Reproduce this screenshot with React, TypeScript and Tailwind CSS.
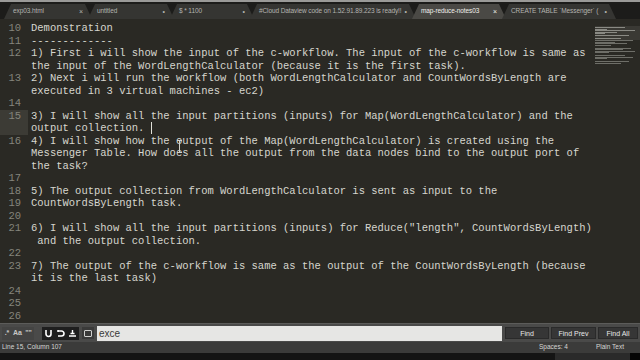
import React from 'react';

type Row = { n?: number; t: string; hl?: boolean; caret?: boolean };

const rows: Row[] = [
  { n: 10, t: 'Demonstration' },
  { n: 11, t: '-------------' },
  { n: 12, t: '1) First i will show the input of the c-workflow. The input of the c-workflow is same as' },
  { t: 'the input of the WordLengthCalculator (because it is the first task).' },
  { n: 13, t: '2) Next i will run the workflow (both WordLengthCalculator and CountWordsByLength are' },
  { t: 'executed in 3 virtual machines - ec2)' },
  { n: 14, t: '' },
  { n: 15, t: '3) I will show all the input partitions (inputs) for Map(WordLengthCalculator) and the', hl: true },
  { t: 'output collection. ', hl: true, caret: true },
  { n: 16, t: '4) I will show how the output of the Map(WordLengthCalculator) is created using the' },
  { t: 'Messenger Table. How does all the output from the data nodes bind to the output port of' },
  { t: 'the task?' },
  { n: 17, t: '' },
  { n: 18, t: '5) The output collection from WordLengthCalculator is sent as input to the' },
  { n: 19, t: 'CountWordsByLength task.' },
  { n: 20, t: '' },
  { n: 21, t: '6) I will show all the input partitions (inputs) for Reduce("length", CountWordsByLength)' },
  { t: ' and the output collection.' },
  { n: 22, t: '' },
  { n: 23, t: '7) The output of the c-workflow is same as the output of the CountWordsByLength (because' },
  { t: 'it is the last task)' },
  { n: 24, t: '' },
  { n: 25, t: '' },
  { n: 26, t: '' },
];

const tabs = [
  { label: 'exp03.html', w: 88, mark: '×' },
  { label: 'untitled', w: 86, mark: '•' },
  { label: '$ * 1100', w: 84, mark: '•' },
  { label: '#Cloud Dataview code on 1.52.91.89.223 is ready!!', w: 166, mark: '•' },
  { label: 'map-reduce-notes03', w: 94, mark: '×', active: true },
  { label: 'CREATE TABLE `Messenger` (', w: 114, mark: '•' },
];

const mini = [30, 12, 40, 22, 10, 34, 0, 26, 38, 20, 32, 16, 0, 36, 28, 40, 14, 0, 30, 38, 12, 0, 34, 26];

function Tab({ label, w, mark, active }: { label: string; w: number; mark: string; active?: boolean }) {
  return (
    <div
      className={`flex items-center justify-between gap-[3px] h-[15px] -mr-[4px] pl-[9px] pr-[9px] ${
        active ? 'bg-[#4a4945] text-[#f0f0ec]' : 'bg-[#353532] text-[#b4b4b0]'
      } [clip-path:polygon(0_100%,7px_0,calc(100%-7px)_0,100%_100%)]`}
      style={{ width: w }}
    >
      <span className="whitespace-nowrap text-[6.5px] leading-none tracking-[-0.1px]">{label}</span>
      <span className="text-[7px] leading-none">{mark}</span>
    </div>
  );
}

export default function App() {
  return (
    <div
      className="w-[640px] h-[360px] flex flex-col overflow-hidden bg-[#111] select-none"
      style={{ fontFamily: '"Liberation Sans", "Open Sans", sans-serif' }}
    >
      <div className="h-[2px] bg-[#9a9a98]" />
      <div className="h-[17px] bg-[#1c1c1a] flex items-end pl-[4px]">
        {tabs.map((t) => (
          <Tab key={t.label} {...t} />
        ))}
      </div>

      {/* editor */}
      <div className="relative flex h-[304px] bg-[#2a2924] pt-[3px]">
        <div className="flex-1 font-['Liberation_Mono',monospace] text-[10.5px] leading-[12.5px]">
          {rows.map((r, i) => (
            <div key={i} className="flex h-[12.5px]">
              <div className={`w-[28px] shrink-0 text-right pr-[7px] text-[#85857c] ${r.hl ? 'bg-[#3c3b35]' : ''}`}>
                {r.n ?? ''}
              </div>
              <div className="pl-[3px] whitespace-pre text-[#d6d6ce] flex items-center">
                {r.t}
                {r.caret && <span className="inline-block w-[1px] h-[12px] bg-[#e0e0d8]" />}
              </div>
            </div>
          ))}
        </div>
        <div className="w-[45px] shrink-0 pt-[4px] flex flex-col gap-[0.5px]">
          <div className="bg-[#3a3934] flex flex-col gap-[0.5px] py-[1px]">
            {mini.slice(0, 8).map((w, i) => (
              <div key={i} className="h-[1px] bg-[#8a8a84]" style={{ width: w }} />
            ))}
          </div>
          {mini.slice(8).map((w, i) => (
            <div key={i} className="h-[1px] bg-[#6e6e68]" style={{ width: w }} />
          ))}
        </div>
        {/* mouse i-beam */}
        <div className="absolute left-[177px] top-[121px] flex flex-col items-center">
          <div className="w-[5px] h-[1px] bg-[#d0d0c8]" />
          <div className="w-[1px] h-[11px] bg-[#d0d0c8]" />
          <div className="w-[5px] h-[1px] bg-[#d0d0c8]" />
        </div>
      </div>

      {/* find bar */}
      <div className="h-[19px] bg-[#4a4a49] border-t border-[#5c5c5a] flex items-center px-[2px] gap-[2px]">
        <div className="flex items-center h-[13px] bg-[#444443] text-[#c8c8c6] text-[7px] font-bold">
          <span className="w-[10px] text-center">.*</span>
          <span className="w-[11px] text-center">Aa</span>
          <span className="w-[11px] text-center">&quot;&quot;</span>
        </div>
        <div className="flex items-center h-[13px] bg-[#1e1e1e] ml-[6px] px-[2px] gap-[3px]">
          <svg width="9" height="9" viewBox="0 0 9 9" fill="none" stroke="#fff" strokeWidth="1.6">
            <path d="M2 1v4a2.5 2.5 0 0 0 5 0V1" />
          </svg>
          <svg width="9" height="9" viewBox="0 0 9 9" fill="none" stroke="#fff" strokeWidth="1.6">
            <path d="M2 2h3.5a2.5 2.5 0 0 1 0 5H2" />
            <path d="M1 2h2" />
          </svg>
          <svg width="9" height="9" viewBox="0 0 9 9" fill="none" stroke="#fff" strokeWidth="1.4">
            <path d="M1 7h7M2.5 4.5h4M4.5 1v3" />
          </svg>
        </div>
        <div className="w-[12px] h-[12px] flex items-center justify-center bg-[#3a3a39] ml-[1px]">
          <div className="w-[8px] h-[7px] border border-[#d0d0ce] rounded-[1px]" />
        </div>
        <div className="w-[407px] h-[15px] bg-[#e6e6e4] ml-[1px] flex items-center px-[2px] text-[10px] text-[#3a3a3a]">
          exce
        </div>
        <div className="flex gap-[2px] ml-[1px]">
          <button className="w-[44px] h-[12px] bg-[#363636] border border-[#2a2a2a] text-[#e8e8e8] text-[7px] leading-none">Find</button>
          <button className="w-[45px] h-[12px] bg-[#363636] border border-[#2a2a2a] text-[#e8e8e8] text-[7px] leading-none">Find Prev</button>
          <button className="w-[40px] h-[12px] bg-[#363636] border border-[#2a2a2a] text-[#e8e8e8] text-[7px] leading-none">Find All</button>
        </div>
      </div>

      {/* status bar */}
      <div className="h-[11px] bg-[#3b3b3a] flex items-center text-[#d6d6d4] text-[6.5px] leading-none px-[2px]">
        <span>Line 15, Column 107</span>
        <span className="ml-auto">Spaces: 4</span>
        <span className="ml-[28px] mr-[14px]">Plain Text</span>
      </div>
      <div className="flex-1 flex">
        <div className="flex-1 bg-[#141414]" />
        <div className="w-[75px] bg-[#2a2a2a]" />
        <div className="w-[10px] bg-[#050505]" />
      </div>
    </div>
  );
}
